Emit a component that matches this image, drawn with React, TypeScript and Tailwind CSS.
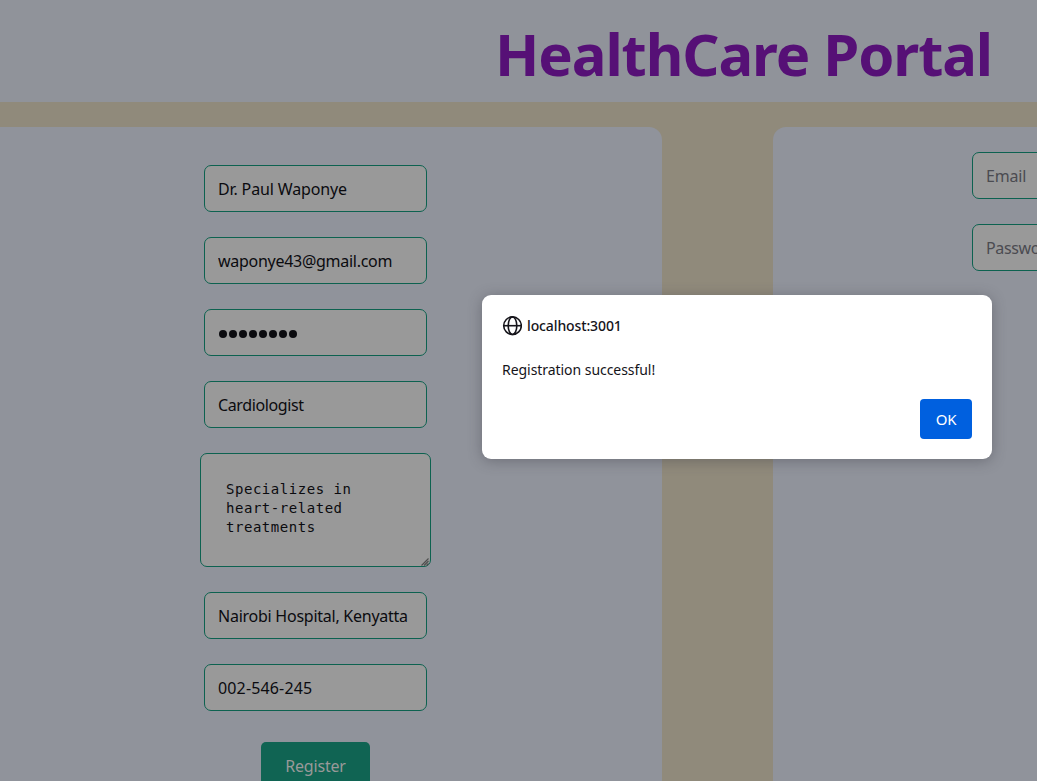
import React from 'react';

type FieldProps = { text: string; spacing: string; placeholder?: boolean };

function Field({ text, spacing, placeholder = false }: FieldProps) {
  return (
    <div className="h-[47px] w-[223px] shrink-0 rounded-[7px] border border-[#0d6250] bg-[#999999] px-[13px]">
      <div
        className={`overflow-hidden whitespace-nowrap text-[16px] leading-[47px] ${spacing} ${
          placeholder ? 'text-[#4b4b51]' : 'text-[#0b0b0f]'
        }`}
      >
        {text}
      </div>
    </div>
  );
}

function PasswordField() {
  return (
    <div className="flex h-[47px] w-[223px] shrink-0 items-center gap-[2px] rounded-[7px] border border-[#0d6250] bg-[#999999] pl-[14px] pt-[3px]">
      {Array.from({ length: 8 }, (_, i) => (
        <span key={i} className="size-[8px] rounded-full bg-[#0b0b0f]" />
      ))}
    </div>
  );
}

function BioField() {
  return (
    <div className="flex h-[114px] w-[231px] shrink-0 items-end justify-between rounded-[7px] border border-[#0d6250] bg-[#999999]">
      <div className="self-start whitespace-pre pl-[25px] pt-[26px] font-['DejaVu_Sans_Mono',monospace] text-[14px] leading-[19px] tracking-[0.54px] text-[#0b0b0f]">
        {'Specializes in\nheart-related\ntreatments'}
      </div>
      <svg width="8" height="8" viewBox="0 0 8 8" className="mr-px" stroke="#4d4d4d" strokeWidth="1.1">
        <path d="M0.5 7.5 7.5 0.5M3 7.5 7.5 3M5.5 7.5 7.5 5.5" />
      </svg>
    </div>
  );
}

function GlobeIcon() {
  return (
    <svg width="20" height="20" viewBox="0 0 20 20" fill="none" stroke="#15141a" strokeWidth="1.6">
      <circle cx="10.5" cy="9.7" r="8.8" />
      <ellipse cx="10.5" cy="9.7" rx="4.3" ry="8.8" />
      <path d="M1.7 9.7h17.6" />
    </svg>
  );
}

function AlertDialog() {
  return (
    <div className="absolute left-[482px] top-[295px] flex h-[164px] w-[510px] flex-col rounded-[9px] bg-white px-[20px] pt-[20px] font-['Noto_Sans',sans-serif] text-[#15141a] shadow-[0_2px_14px_rgba(58,57,68,0.4)]">
      <div className="flex h-[22px] items-center gap-[5px]">
        <GlobeIcon />
        <span className="text-[14px] font-medium leading-[22px] tracking-[-0.12px]">localhost:3001</span>
      </div>
      <p className="mt-[22px] text-[14px] leading-[22px] tracking-[-0.05px]">Registration successful!</p>
      <button className="mt-[18px] h-[40px] w-[52px] self-end rounded-[4px] bg-[#0060df] pt-px text-[15px] tracking-[-0.3px] text-white">OK</button>
    </div>
  );
}

export default function App() {
  return (
    <div className="relative flex h-[781px] w-[1037px] flex-col overflow-hidden bg-[#908a7b] font-['Noto_Sans',sans-serif]">
      <header className="h-[102px] shrink-0 bg-[#90939a] pl-[495px] pt-[14px]">
        <h1 className="whitespace-nowrap text-[58px] font-bold leading-[80px] tracking-[-1.1px] text-[#561076]">HealthCare Portal</h1>
      </header>
      <main className="flex min-h-0 flex-1 gap-[111px] pt-[25px]">
        <section className="flex w-[662px] shrink-0 flex-col items-center gap-[25px] rounded-tr-[13px] bg-[#90939b] pr-[31px] pt-[38px]">
          <Field text="Dr. Paul Waponye" spacing="tracking-[-0.14px]" />
          <Field text="waponye43@gmail.com" spacing="tracking-[-0.28px]" />
          <PasswordField />
          <Field text="Cardiologist" spacing="tracking-[-0.38px]" />
          <BioField />
          <Field text="Nairobi Hospital, Kenyatta " spacing="tracking-[-0.25px]" />
          <Field text="002-546-245" spacing="tracking-[0.15px]" />
          <button className="mt-[6px] h-[47px] w-[109px] shrink-0 rounded-[5px] bg-[#106453] text-[16px] leading-[48px] tracking-[-0.2px] text-[#999999]">
            Register
          </button>
        </section>
        <section className="flex flex-1 flex-col gap-[25px] overflow-hidden rounded-tl-[13px] bg-[#90939b] pl-[199px] pt-[25px]">
          <Field text="Email" spacing="tracking-[-0.2px]" placeholder />
          <Field text="Password" spacing="tracking-[-0.35px]" placeholder />
        </section>
      </main>
      <AlertDialog />
    </div>
  );
}
